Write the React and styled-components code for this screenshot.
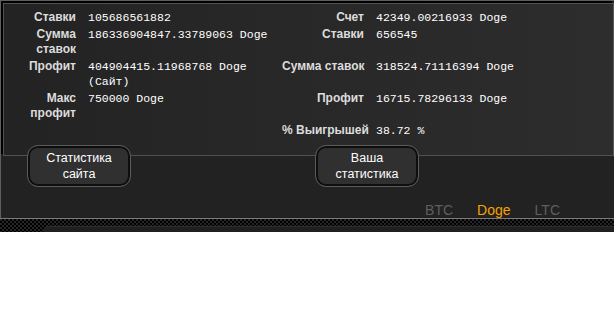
import React from 'react';
import styled, { createGlobalStyle } from 'styled-components';

const GlobalStyle = createGlobalStyle`
    body {
        margin: 0;
        background: #fff;
        font-family: 'Liberation Sans', Arial, sans-serif;
    }
`;

const stats = [
    { label: 'Ставки', value: '105686561882', label2: 'Счет', value2: '42349.00216933 Doge' },
    { label: 'Сумма ставок', value: '186336904847.33789063 Doge', label2: 'Ставки', value2: '656545' },
    { label: 'Профит', value: '404904415.11968768 Doge', note: '(Сайт)', label2: 'Сумма ставок', value2: '318524.71116394 Doge' },
    { label: 'Макс профит', value: '750000 Doge', label2: 'Профит', value2: '16715.78296133 Doge' },
    { label: '', value: '', label2: '% Выигрышей', value2: '38.72 %' },
];

const coins = ['BTC', 'Doge', 'LTC'];

export default function App() {
    return (<>
        <GlobalStyle />
        <Wrapper>
            <Panel>
                <Grid>
                    {stats.map((row, i) => (
                        <React.Fragment key={i}>
                            <Label>{row.label}</Label>
                            <Value>{row.value}{row.note && <><br />{row.note}</>}</Value>
                            <Label wide>{row.label2}</Label>
                            <Value>{row.value2}</Value>
                        </React.Fragment>
                    ))}
                </Grid>
            </Panel>
            <Buttons>
                <StatButton>Статистика<br />сайта</StatButton>
                <StatButton>Ваша<br />статистика</StatButton>
            </Buttons>
            <Tabs>
                {coins.map(c => <Tab key={c} active={c === 'Doge'}>{c}</Tab>)}
            </Tabs>
        </Wrapper>
        <Footer>
            <FooterBar />
        </Footer>
    </>);
}

const Wrapper = styled.div`
    width: 614px;
    box-sizing: border-box;
    background: #222;
    border-top: 1px solid #5e5e5e;
    border-left: 1px solid #5e5e5e;
`;

const Panel = styled.div`
    margin: 2px 0 0 2px;
    border: 1px solid #505050;
    border-right-color: #5a5a5a;
    box-shadow: -2px -2px 0 #000;
    background: linear-gradient(to right, #232323, #2d2d2d);
    padding: 6px 0 17px 22px;
`;

const Grid = styled.div`
    display: grid;
    grid-template-columns: 50px 182px 82px 1fr;
    column-gap: 12px;
    row-gap: 2px;
    line-height: 15px;
`;

const Label = styled.div`
    font-weight: bold;
    font-size: 12px;
    color: #dcdcdc;
    text-align: right;
    white-space: ${p => (p.wide ? 'nowrap' : 'normal')};
`;

const Value = styled.div`
    font-family: 'Liberation Mono', 'Courier New', monospace;
    font-size: 11.5px;
    color: #fff;
    white-space: nowrap;
`;

const Buttons = styled.div`
    display: flex;
    gap: 184px;
    padding-left: 26px;
    margin-top: -11px;
    position: relative;
`;

const StatButton = styled.div`
    width: 104px;
    height: 42px;
    box-sizing: border-box;
    border-radius: 11px;
    border: 1px solid #5a5a5a;
    box-shadow: inset 0 0 0 2px #0e0e0e;
    background: #303030;
    color: #fff;
    font-size: 12.5px;
    line-height: 16px;
    display: flex;
    align-items: center;
    justify-content: center;
    text-align: center;
`;

const Tabs = styled.div`
    display: flex;
    justify-content: flex-end;
    padding: 15px 42px 0 0;
`;

const Tab = styled.span`
    padding: 0 12px;
    font-size: 14px;
    line-height: 16px;
    color: ${p => (p.active ? '#f7a000' : '#5f5f5f')};
`;

const Footer = styled.div`
    width: 614px;
    height: 13px;
    border-top: 1px solid #7a7a7a;
    background-color: #111;
    background-image: repeating-conic-gradient(#000 0 25%, #262626 0 50%);
    background-size: 4px 4px;
    display: flex;
    align-items: flex-end;
`;

const FooterBar = styled.div`
    flex: 1;
    margin-left: 43px;
    height: 5px;
    background: #1f1f1f;
    border-top: 1px solid #2c2c2c;
    border-top-left-radius: 6px;
`;
